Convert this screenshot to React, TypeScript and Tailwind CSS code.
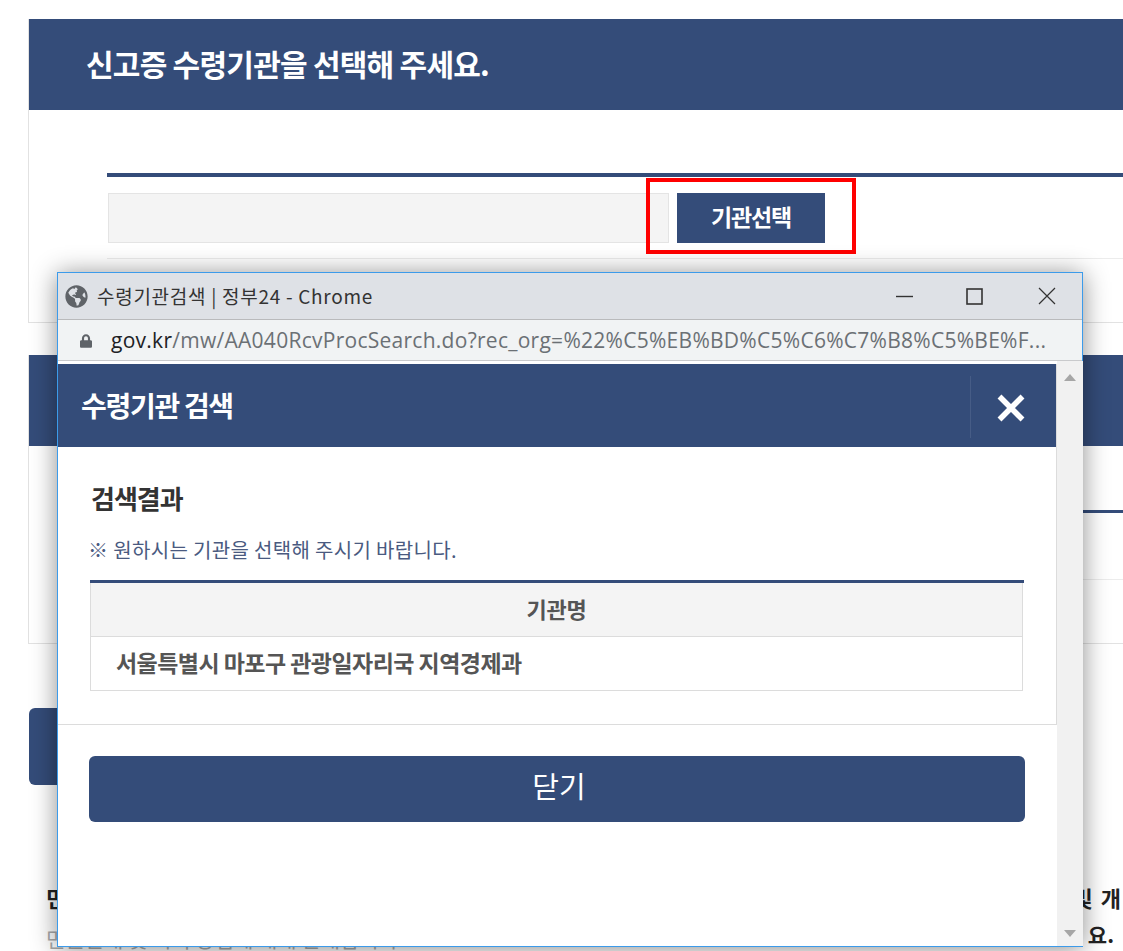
import { FaGlobeAmericas, FaLock } from "react-icons/fa";

const kr = "font-['Noto_Sans_CJK_KR','Noto_Sans',sans-serif]";
const navy = "bg-[#344c79]";

function Section({ title, children, className }: { title: string; children: React.ReactNode; className: string }) {
  return (
    <section className={`w-[1200px] ml-[28px] border border-[#e2e2e2] border-t-0 ${className}`}>
      <div className={`h-[91px] ${navy} flex items-center pl-[57px]`}>
        <h2 className="text-[30px] font-bold text-white tracking-[-0.75px] -mt-[3px]">{title}</h2>
      </div>
      {children}
    </section>
  );
}

function Background() {
  return (
    <div className="pt-[19px]">
      <Section title="신고증 수령기관을 선택해 주세요." className="h-[304px]">
        <div className="ml-[78px] mt-[63px] border-t-[4px] border-[#344c79]">
          <div className="h-[82px] border-b border-[#ececec] flex items-start pt-[16px] relative">
            <div className="ml-px w-[561px] h-[50px] bg-[#f4f4f4] border border-[#e4e4e4]" />
            <button className={`ml-[8px] w-[148px] h-[50px] ${navy} text-white text-[23px] font-bold tracking-[-1.1px] pb-[3px]`}>기관선택</button>
            <div className="absolute left-[539px] top-[1px] w-[210px] h-[76px] border-[4px] border-[#ff0000]" />
          </div>
        </div>
      </Section>
      <Section title="신고증 수령 방법을 선택해 주세요." className="h-[289px] mt-[32px]">
        <div className="ml-[78px] mt-[64px] border-t-[3px] border-[#344c79]">
          <div className="h-[67px] border-b border-[#ececec]" />
        </div>
      </Section>
      <button className={`block ml-[29px] mt-[64px] w-[300px] h-[77px] rounded-[6px] ${navy}`} />
      <p className="ml-[46px] mt-[98px] w-[1075px] text-[22px] font-bold text-[#222] flex justify-between leading-[28px]">
        <span>민</span><span className="[word-spacing:3px]">및 개</span>
      </p>
      <p className="ml-[46px] mt-[9px] w-[1068px] text-[21px] flex justify-between items-start leading-[28px]">
        <span className="mt-[4px] text-[#aaa] font-normal">민원안내 및 처리 방법에 대해 안내합니다.</span>
        <span className="font-bold text-[#222]">요.</span>
      </p>
    </div>
  );
}

function Arrow({ up }: { up?: boolean }) {
  return (
    <svg width="12" height="7" viewBox="0 0 12 7" className="fill-[#a6a6a6]">
      <path d={up ? "M6 0 12 7H0z" : "M0 0h12L6 7z"} />
    </svg>
  );
}

function Popup() {
  return (
    <div className="absolute left-[57px] top-[272px] w-[1026px] h-[675px] border border-[#3c9bea] bg-white flex flex-col shadow-[0_2px_24px_rgba(0,0,0,0.45)]">
      <div className="h-[47px] shrink-0 bg-[#dee1e6] border-b border-[#b9babc] flex items-center pl-[7px] font-['Noto_Sans_CJK_KR','Open_Sans',sans-serif]">
        <FaGlobeAmericas className="text-[#5f6368] w-[23px] h-[23px]" />
        <span className="ml-[9px] text-[19px] text-[#333] tracking-[0.72px]">수령기관검색 | 정부24 - Chrome</span>
        <div className="ml-auto flex items-center pr-[26px]">
          <svg width="19" height="17" viewBox="0 0 19 17" className="stroke-[#333]" fill="none" strokeWidth="1.4"><path d="M1 8.5h17" /></svg>
          <svg width="17" height="17" viewBox="0 0 17 17" className="stroke-[#333] ml-[52px]" fill="none" strokeWidth="1.6"><rect x="1" y="1" width="15" height="15" /></svg>
          <svg width="18" height="18" viewBox="0 0 18 18" className="stroke-[#333] ml-[55px]" fill="none" strokeWidth="1.2"><path d="M1 1l16 16M17 1 1 17" /></svg>
        </div>
      </div>
      <div className="h-[41px] shrink-0 bg-[#f1f3f4] border-b border-[#c9cacc] flex items-center pl-[22px] pt-[2px] font-['Open_Sans',sans-serif]">
        <FaLock className="text-[#5f6368] w-[12px] h-[14px]" />
        <span className="ml-[19px] text-[21px] text-[#6b7075] whitespace-nowrap tracking-[0.27px]">
          <span className="text-[#202124]">gov.kr</span>/mw/AA040RcvProcSearch.do?rec_org=%22%C5%EB%BD%C5%C6%C7%B8%C5%BE%F...
        </span>
      </div>
      <div className={`flex-1 flex min-h-0 ${kr}`}>
        <div className="flex-1 pt-[3px]">
          <div className="border-r border-b border-[#dcdcdc] h-[361px]">
            <div className={`h-[83px] ${navy} flex items-center pl-[23px] relative`}>
              <h1 className="text-[28px] font-bold text-white tracking-[-1.3px] -mt-[1px]">수령기관 검색</h1>
              <div className="absolute left-[912px] top-[12px] h-[62px] w-px bg-[#465c86]" />
              <svg className="absolute left-[939px] top-[30px]" width="28" height="28" viewBox="0 0 28 28" fill="none" stroke="#fff" strokeWidth="5.5"><path d="M2.5 2.5l23 23M25.5 2.5l-23 23" /></svg>
            </div>
            <div className="pl-[32px] pt-[31px] pr-[32px]">
              <h3 className="ml-px text-[26px] leading-[40px] font-bold text-[#333] tracking-[-1px]">검색결과</h3>
              <p className="-ml-[2px] mt-[19px] text-[20px] leading-[26px] text-[#4a5a80] tracking-[0.34px]">※ 원하시는 기관을 선택해 주시기 바랍니다.</p>
              <div className="mt-[17px] w-[934px] border-t-[3px] border-[#344c79]">
                <div className="mr-px h-[54px] bg-[#f4f4f4] border border-t-0 border-[#dcdcdc] flex items-center justify-center text-[22px] font-bold text-[#555] tracking-[-0.3px] pb-[2px]">기관명</div>
                <div className="mr-px h-[54px] border border-t-0 border-[#dcdcdc] flex items-center pl-[25px] text-[23px] font-bold text-[#555] tracking-[-0.55px] pb-[2px]">서울특별시 마포구 관광일자리국 지역경제과</div>
              </div>
            </div>
          </div>
          <div className="pl-[31px] pt-[31px]">
            <button className={`w-[936px] h-[66px] rounded-[6px] ${navy} text-white text-[29px] pb-[6px] pl-[4px]`}>닫기</button>
          </div>
        </div>
        <div className="w-[26px] shrink-0 bg-[#f1f1f1] flex flex-col items-center justify-between pt-[13px] pb-[9px]">
          <Arrow up />
          <Arrow />
        </div>
      </div>
    </div>
  );
}

export default function App() {
  return (
    <div className={`relative w-[1123px] h-[951px] overflow-hidden bg-white ${kr}`}>
      <Background />
      <Popup />
    </div>
  );
}
